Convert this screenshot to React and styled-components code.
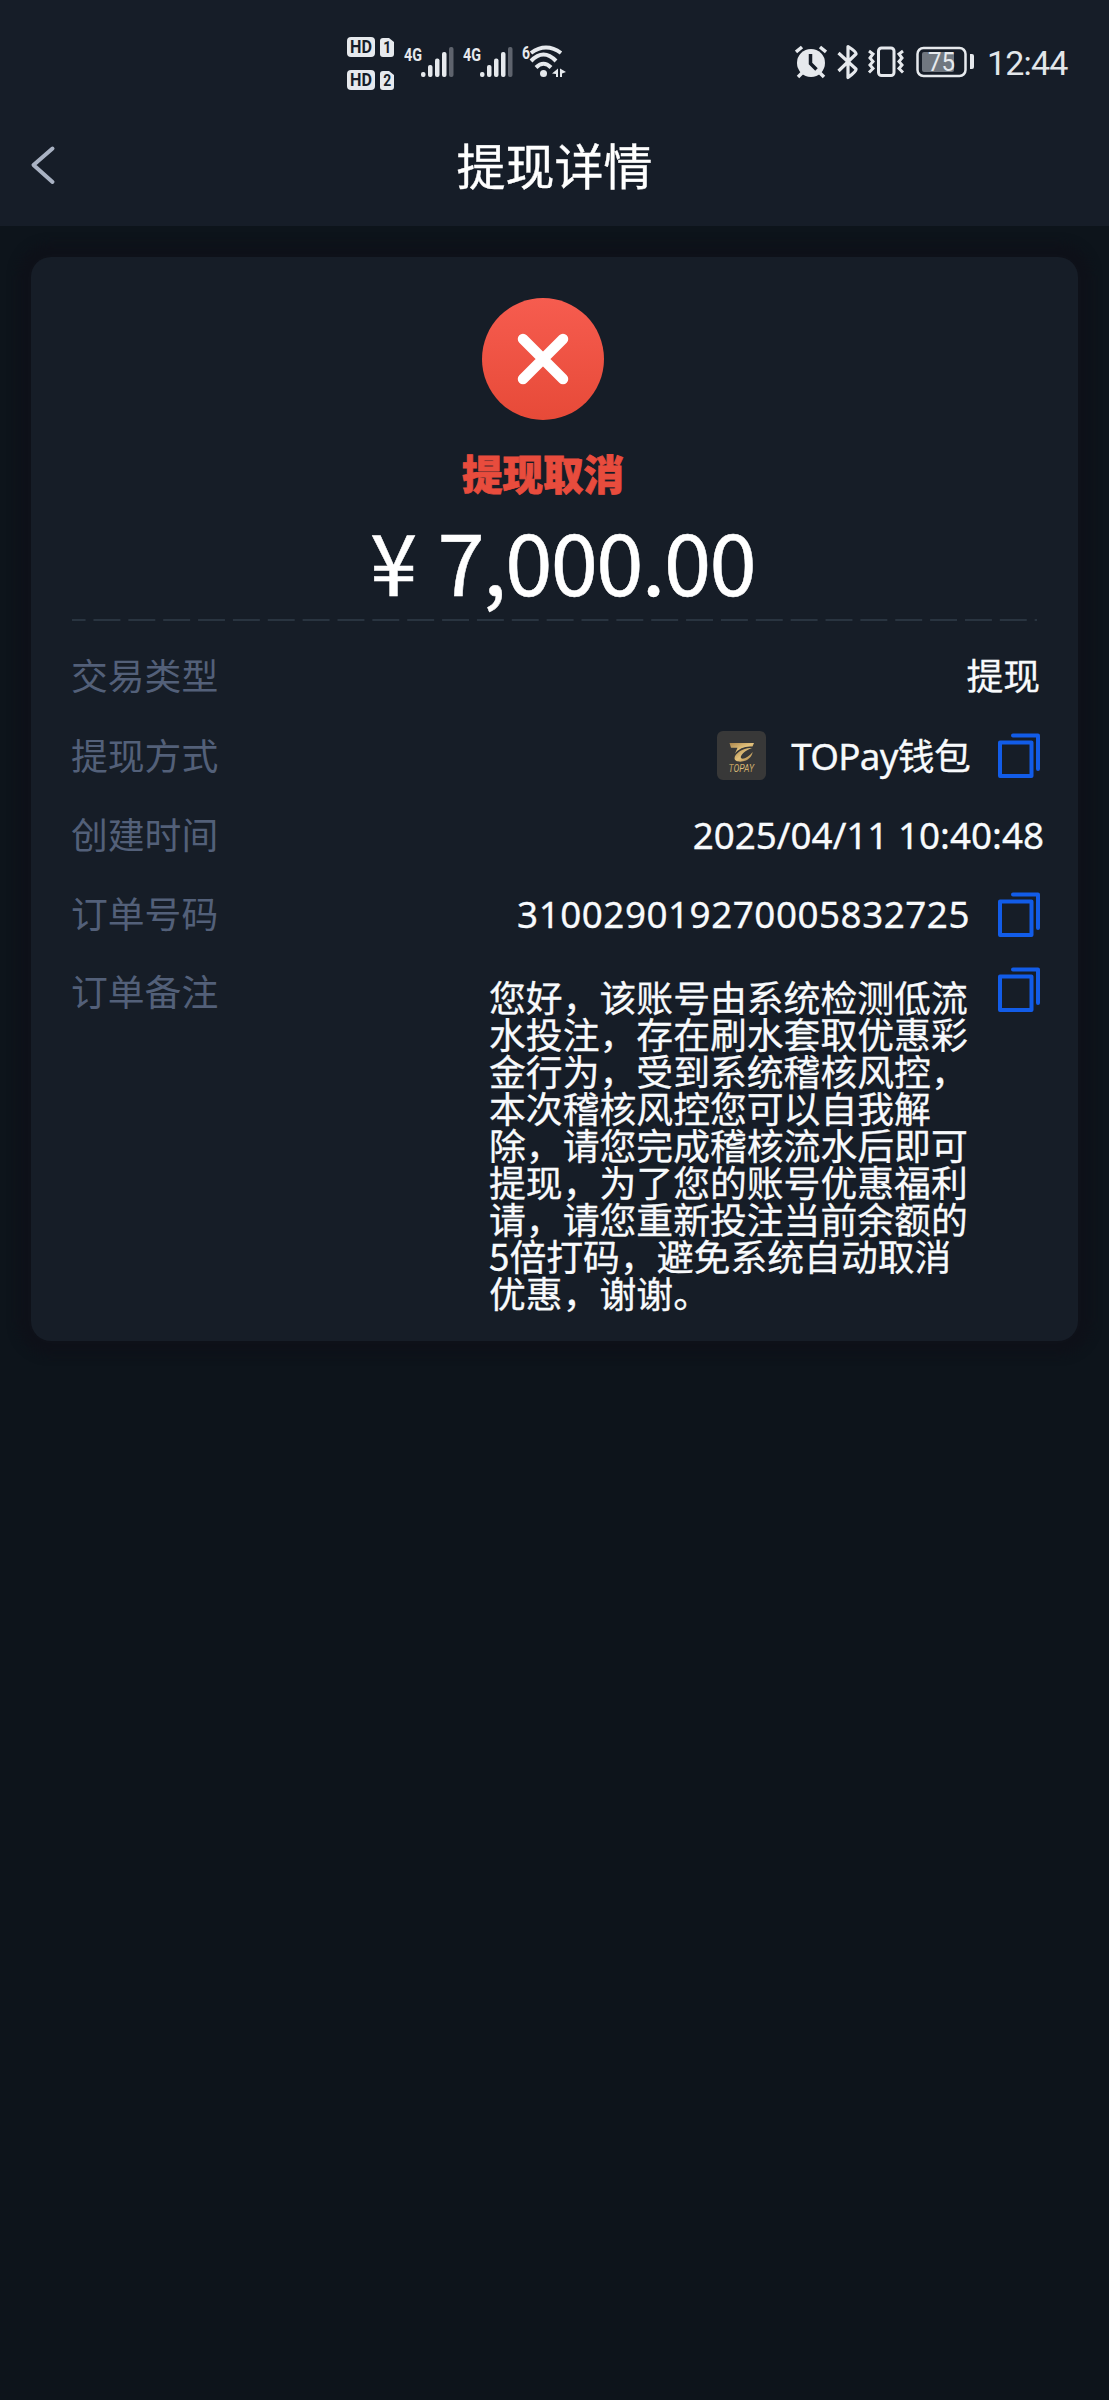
import styled, { createGlobalStyle } from "styled-components";

const GlobalStyle = createGlobalStyle`
  * {
    box-sizing: border-box;
  }

  body {
    margin: 0;
    background: #0d141b;
    color: #f8fafc;
    font-family: "Noto Sans CJK SC", sans-serif;
  }
`;

const Page = styled.main`
  min-height: 2400px;
  overflow: hidden;
`;

const StatusBar = styled.div`
  display: flex;
  align-items: flex-start;
  height: 106px;
  padding: 34px 40px 0 345px;
  background: #161d28;
`;

const StatusSpacer = styled.div`
  flex: 1;
`;

const StatusIcon = styled.svg`
  display: block;
  flex: none;
  height: 60px;
  width: ${(props) => props.$width}px;
  margin-right: ${(props) => props.$gap || 0}px;
  fill: #e6e9ed;
  font-family: Roboto, sans-serif;
`;

const Clock = styled.time`
  width: 82px;
  padding-top: 9px;
  font: 400 34px/40px Roboto, sans-serif;
  letter-spacing: -0.8px;
  color: #e2e6ea;
  white-space: nowrap;
`;

const Header = styled.header`
  display: grid;
  grid-template-columns: 90px 1fr 90px;
  align-items: center;
  height: 120px;
  background: #161d28;
`;

const BackButton = styled.button`
  width: 90px;
  height: 60px;
  padding: 0 0 0 30px;
  border: none;
  background: none;

  svg {
    display: block;
  }
`;

const Title = styled.h1`
  margin: 0 0 4px;
  font-size: 49px;
  font-weight: 400;
  line-height: 60px;
  text-align: center;
  color: #fff;
  -webkit-text-stroke: 0.4px #fff;
`;

const Card = styled.section`
  height: 1084px;
  margin: 31px 31px 0;
  padding: 41px 38px 0 41px;
  border-radius: 20px;
  background: #161d27;
  box-shadow: 0 0 10px 14px #0e1119;
`;

const Summary = styled.div`
  display: flex;
  flex-direction: column;
  align-items: center;
  height: 321px;
  padding-right: 26px;
`;

const Status = styled.p`
  margin: 23px 0 0;
  font-size: 40.5px;
  font-weight: 900;
  line-height: 60px;
  color: #e84c3d;
  -webkit-text-stroke: 0.8px #e84c3d;
`;

const Amount = styled.p`
  margin: -2px -39px 0 0;
  font-size: 85px;
  line-height: 115px;
  letter-spacing: -1.6px;
  color: #fff;
  -webkit-text-stroke: 0.5px #fff;

  span {
    margin-right: 22px;
  }
`;

const Divider = styled.div`
  height: 2px;
  margin-right: 3px;
  background: linear-gradient(to right, #293440 76%, transparent 0) 21.5px 0 / 34.87px 2px repeat-x;
`;

const Details = styled.dl`
  margin: 15px 0 0;
`;

const Row = styled.div`
  display: flex;
  justify-content: space-between;
  height: ${(props) => props.$height}px;
  align-items: ${(props) => (props.$top ? "flex-start" : "center")};
`;

const Label = styled.dt`
  margin: ${(props) => (props.$top ? "-2px" : "0")} 0 ${(props) => (props.$top ? 0 : 4)}px -1px;
  font-size: 36.8px;
  line-height: ${(props) => (props.$top ? 78 : 60)}px;
  color: #536079;
`;

const Value = styled.dd`
  display: flex;
  align-items: center;
  margin: 0 ${(props) => props.$outset || 0}px 0 0;
  font-family: "Noto Sans", "Noto Sans CJK SC", sans-serif;
  font-size: 36.8px;
  line-height: 60px;
  letter-spacing: ${(props) => props.$spacing || 0}px;
  -webkit-text-stroke: 0.3px #f8fafc;
`;

const WalletName = styled.span`
  margin-left: 25px;
  letter-spacing: -0.7px;
`;

const Remark = styled.dd`
  display: flex;
  align-items: flex-start;
  margin: 0;

  p {
    width: 483px;
    margin: 25px 0 0;
    font-size: 36.85px;
    line-height: 36.95px;
    -webkit-text-stroke: 0.3px #f8fafc;
  }
`;

const CopyButton = styled.button`
  display: block;
  margin: ${(props) => props.$top || 0}px 0 0 ${(props) => props.$left}px;
  padding: 0;
  border: none;
  background: none;

  svg {
    display: block;
  }
`;

const REMARK =
  "您好，该账号由系统检测低流水投注，存在刷水套取优惠彩金行为，受到系统稽核风控，本次稽核风控您可以自我解除，请您完成稽核流水后即可提现，为了您的账号优惠福利请，请您重新投注当前余额的5倍打码，避免系统自动取消优惠，谢谢。";

const Copy = ({ left, top }) => (
  <CopyButton $left={left} $top={top} aria-label="复制">
    <svg width="42" height="45" fill="none" stroke="#125ce8" strokeWidth="4" strokeLinecap="round" strokeLinejoin="round">
      <rect x="2" y="9.5" width="31.5" height="33.5" />
      <path d="M15 2.5H40V36" />
    </svg>
  </CopyButton>
);

const HdBadges = () => (
  <StatusIcon $width={51} $gap={8} viewBox="0 0 51 60">
    {[3, 36].map((y, i) => (
      <g key={y}>
        <rect x="2" y={y} width="28" height="20" rx="4" />
        <path d={`M35 ${y + 4}q0-3 3-3h6l5 4v12q0 3-3 3h-8q-3 0-3-3z`} />
        <g fill="#161d28" fontWeight="700">
          <text x="5" y={y + 16} fontSize="18" textLength="22" lengthAdjust="spacingAndGlyphs">HD</text>
          <text x="38.3" y={y + 16} fontSize="16" textLength="8" lengthAdjust="spacingAndGlyphs">{i + 1}</text>
        </g>
      </g>
    ))}
  </StatusIcon>
);

const Signal = ({ gap }) => (
  <StatusIcon $width={50} $gap={gap} viewBox="0 0 50 60">
    <text x="0" y="26.5" fontSize="19" fontWeight="700" textLength="18" lengthAdjust="spacingAndGlyphs">4G</text>
    <rect x="17" y="38" width="4.5" height="5" rx="2" />
    <rect x="24" y="31" width="4.5" height="12" rx="2" />
    <rect x="31" y="24.5" width="4.5" height="18.5" rx="2" />
    <rect x="38" y="18" width="4.5" height="25" rx="2" />
    <rect x="45" y="13" width="4.5" height="30" rx="2" opacity="0.35" />
  </StatusIcon>
);

const Wifi = () => (
  <StatusIcon $width={44} viewBox="0 0 44 60">
    <text x="0" y="25" fontSize="19" fontWeight="700" textLength="8" lengthAdjust="spacingAndGlyphs">6</text>
    <g fill="none" stroke="#e6e9ed" strokeWidth="4">
      <path d="M9 19Q24 8 39 19" />
      <path d="M9 27Q21.5 14 34 27" />
      <path d="M14 33.5Q21.5 26 29 33.5" />
    </g>
    <circle cx="21.5" cy="39.5" r="3.5" />
    <path d="M36 34.5V43h-2v-3l-4-.5zM38 43v-8.5l6 3.5-4 1.5v3.5z" />
  </StatusIcon>
);

const Alarm = () => (
  <StatusIcon $width={32} $gap={10} viewBox="0 0 32 60">
    <circle cx="16" cy="29" r="14" />
    <g fill="none" stroke="#e6e9ed" strokeWidth="3.5">
      <path d="M1 18l6-5M31 18l-6-5M7 39l-4 4M25 39l4 4" />
    </g>
    <path d="M15.5 20v9.5l6 6" fill="none" stroke="#161d28" strokeWidth="3.5" />
  </StatusIcon>
);

const Bluetooth = () => (
  <StatusIcon $width={22} $gap={8} viewBox="0 0 22 60">
    <path
      d="M1.5 19L19 35Q20 37 11 43.5V12.5Q20 18 19 20L1.5 37"
      fill="none"
      stroke="#e6e9ed"
      strokeWidth="3.2"
      strokeLinejoin="round"
    />
  </StatusIcon>
);

const Vibrate = () => (
  <StatusIcon $width={38} $gap={11} viewBox="0 0 38 60">
    <g fill="none" stroke="#e6e9ed" strokeWidth="3">
      <rect x="11.5" y="14" width="15.5" height="27.5" rx="3" />
      <path d="M2 17l4 3-3 4 3 3.5-3 3.5 3 3.5-4 4M36 17l-4 3 3 4-3 3.5 3 3.5-3 3.5 4 4" />
    </g>
  </StatusIcon>
);

const Battery = () => (
  <StatusIcon $width={60} $gap={11} viewBox="0 0 60 60">
    <rect x="1.5" y="14" width="48" height="28" rx="6" fill="none" stroke="#e6e9ed" strokeWidth="2.5" />
    <rect x="6" y="18" width="32" height="20" rx="2" fill="#707780" />
    <path d="M54 20h2q2 0 2 2v11q0 2-2 2h-2z" />
    <text x="12" y="37" fontSize="25.5" textLength="27" lengthAdjust="spacingAndGlyphs">75</text>
  </StatusIcon>
);

const WalletLogo = () => (
  <svg width="49" height="49" viewBox="0 0 49 49">
    <defs>
      <linearGradient id="gold" x1="0" y1="0" x2="1" y2="1">
        <stop offset="0" stopColor="#a9844c" />
        <stop offset="0.5" stopColor="#e3c27c" />
        <stop offset="1" stopColor="#a37c42" />
      </linearGradient>
    </defs>
    <rect width="49" height="49" rx="6" fill="#383838" />
    <g fill="url(#gold)">
      <path d="M12.5 12H37L35.5 15.5Q24 14.5 18 22.5L20.500 16.8H14Z" />
      <path d="M35 17C27 16 18 22 17.5 27C17.5 31 24 31.5 29 29.5C33 27.5 35.5 24 35.5 21C32 26 26 29 24 27C22.5 25 28 19 35 17Z" />
      <text
        x="11.5"
        y="40.5"
        fontFamily="Roboto, sans-serif"
        fontSize="10.5"
        fontStyle="italic"
        textLength="25.5"
        lengthAdjust="spacingAndGlyphs"
      >
        TOPAY
      </text>
    </g>
  </svg>
);

const App = () => (
  <Page>
    <GlobalStyle />
    <StatusBar>
      <HdBadges />
      <Signal gap={9} />
      <Signal gap={9} />
      <Wifi />
      <StatusSpacer />
      <Alarm />
      <Bluetooth />
      <Vibrate />
      <Battery />
      <Clock>12:44</Clock>
    </StatusBar>

    <Header>
      <BackButton aria-label="返回">
        <svg width="26" height="42" fill="none" stroke="#a9b2c3" strokeWidth="4" strokeLinecap="round" strokeLinejoin="round">
          <path d="M22.5 3.5L3.5 20L22.5 37" />
        </svg>
      </BackButton>
      <Title>提现详情</Title>
    </Header>

    <Card>
      <Summary>
        <svg width="122" height="122" viewBox="0 0 122 122">
          <defs>
            <linearGradient id="cancel" x1="0" y1="0" x2="0" y2="1">
              <stop offset="0" stopColor="#f65c4f" />
              <stop offset="1" stopColor="#e74a38" />
            </linearGradient>
          </defs>
          <circle cx="61" cy="61" r="61" fill="url(#cancel)" />
          <path d="M41 41L81 81M81 41L41 81" stroke="#fff" strokeWidth="10.5" strokeLinecap="round" />
        </svg>
        <Status>提现取消</Status>
        <Amount>
          <span>¥</span>7,000.00
        </Amount>
      </Summary>

      <Divider />

      <Details>
        <Row $height={80}>
          <Label>交易类型</Label>
          <Value>提现</Value>
        </Row>
        <Row $height={79}>
          <Label>提现方式</Label>
          <Value>
            <WalletLogo />
            <WalletName>TOPay钱包</WalletName>
            <Copy left={28} />
          </Value>
        </Row>
        <Row $height={80}>
          <Label>创建时间</Label>
          <Value $outset={-4}>2025/04/11 10:40:48</Value>
        </Row>
        <Row $height={78}>
          <Label>订单号码</Label>
          <Value $spacing={0.52}>
            310029019270005832725
            <Copy left={28} />
          </Value>
        </Row>
        <Row $height={370} $top>
          <Label $top>订单备注</Label>
          <Remark>
            <p>{REMARK}</p>
            <Copy left={26} top={14} />
          </Remark>
        </Row>
      </Details>
    </Card>
  </Page>
);

export default App;
